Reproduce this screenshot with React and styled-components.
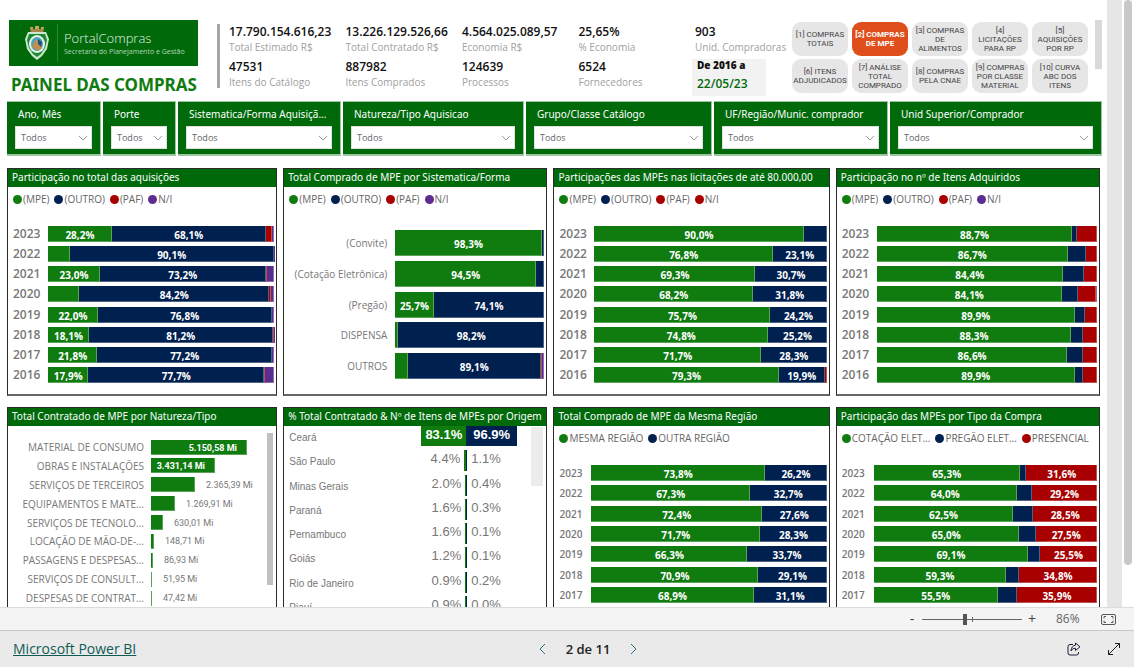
import React from 'react';
import styled, { createGlobalStyle } from 'styled-components';

const GREEN = '#107c10';
const NAVY = '#002050';
const RED = '#a80000';
const PURPLE = '#5c2d91';

const GlobalStyle = createGlobalStyle`
  * {
    box-sizing: border-box;
  }

  body {
    margin: 0;
    font-family: 'Open Sans', 'Noto Sans', sans-serif;
    font-size: 10px;
    color: #666;
    background: #fff;
  }

  button, select {
    font-family: inherit;
  }
`;

const Page = styled.div`
  display: flex;
  flex-direction: column;
  height: 100vh;
  overflow: hidden;
`;

const Viewport = styled.div`
  flex: 1;
  min-height: 0;
  display: flex;
  overflow: hidden;
`;

const Report = styled.main`
  flex: 1;
  min-width: 0;
  padding: 20px 5px 0 7px;
`;

const Gutter = styled.div`
  width: 15px;
  background: #e6e6e6;
`;

const PageScroll = styled.div`
  width: 12px;
  padding: 0 2px;
`;

const PageThumb = styled.div`
  height: 93%;
  border-radius: 4px;
  background: #c8c8c8;
`;

/* Header */

const Header = styled.header`
  display: flex;
  height: 81px;
`;

const Brand = styled.div`
  width: 189px;
  margin-left: 2px;
`;

const Logo = styled.div`
  display: flex;
  align-items: center;
  height: 46px;
  padding-left: 14px;
  background: #006a0b;
  color: #e3f0e3;
`;

const LogoText = styled.div`
  height: 38px;
  margin-left: 6px;
  padding: 5px 0 0 6px;
  border-left: 1px solid #2d8436;
  white-space: nowrap;
`;

const LogoName = styled.div`
  font-size: 13px;
  line-height: 18px;
  font-weight: 300;
`;

const LogoSub = styled.div`
  font-size: 7px;
  line-height: 10px;
  color: #b5d6b6;
`;

const PageTitle = styled.h1`
  margin: 8px 0 0 2px;
  font-family: 'Noto Sans', sans-serif;
  font-size: 17px;
  line-height: 22px;
  font-weight: 700;
  color: ${GREEN};
  white-space: nowrap;
`;

const Kpis = styled.section`
  flex: 1;
  min-width: 0;
  display: grid;
  grid-template-columns: repeat(4, 1fr) 97px;
  grid-auto-rows: 35px;
  align-content: start;
  height: 64px;
  margin: 4px 0 0 19px;
  padding-left: 9px;
  border-left: 3px solid #a6a6a6;
`;

const Kpi = styled.div`
  white-space: nowrap;
`;

const KpiValue = styled.div`
  font-size: 12px;
  line-height: 16px;
  font-weight: 600;
  color: #111;
`;

const KpiLabel = styled.div`
  font-size: 10px;
  line-height: 14px;
  color: #a0a0a0;
`;

const Period = styled.div`
  width: 74px;
  height: 37px;
  margin-left: -3px;
  padding-left: 5px;
  background: #f2f2f2;
  color: #111;
  font-size: 10px;
  line-height: 13px;
  font-weight: 800;
  white-space: nowrap;
`;

const PeriodDate = styled.div`
  margin-top: 2px;
  font-size: 12px;
  line-height: 20px;
  font-weight: 600;
  color: #006a0b;
`;

const Tabs = styled.nav`
  display: grid;
  grid-template-columns: repeat(5, 56px);
  grid-auto-rows: 34px;
  align-content: start;
  gap: 3px 4px;
  margin-top: 2px;
`;

const Tab = styled.button`
  display: flex;
  align-items: center;
  justify-content: center;
  padding: 0;
  border: 0;
  border-radius: 9px;
  background: ${({ $active }) => ($active ? '#de4f1b' : '#e6e6e6')};
  color: ${({ $active }) => ($active ? '#fff' : '#444')};
  font-family: Roboto, sans-serif;
  font-size: 8px;
  line-height: 9px;
  font-weight: ${({ $active }) => ($active ? 700 : 400)};
  white-space: pre-line;
`;

const TabScroll = styled.div`
  width: 7px;
  height: 49px;
  margin-left: 7px;
  background: #d9d9d9;
`;

/* Slicers */

const Slicers = styled.section`
  display: grid;
  grid-template-columns: 94fr 73fr 163fr 181fr 186fr 174fr 212fr;
  gap: 2px;
`;

const Slicer = styled.label`
  display: block;
  min-width: 0;
  height: 55px;
  padding: 4px 8px 0;
  border: 1px solid #9cc79f;
  border-width: 1px 1px 2px 0;
  background: #006a0b;
  color: #fff;
  font-size: 10px;
  line-height: 16px;
  white-space: nowrap;
`;

const SlicerName = styled.span`
  display: block;
  padding-left: 3px;
  font-family: 'Noto Sans', sans-serif;
`;

const SelectBox = styled.span`
  position: relative;
  display: block;
  margin-top: 4px;

  svg {
    position: absolute;
    right: 4px;
    top: 8px;
    pointer-events: none;
  }
`;

const Select = styled.select`
  display: block;
  width: 100%;
  height: 23px;
  padding: 0 0 0 5px;
  appearance: none;
  border: 1px solid #e0e0e0;
  border-radius: 0;
  background: #fff;
  color: #666;
  font-size: 9px;
`;

/* Cards */

const Cards = styled.section`
  display: grid;
  grid-template-columns: 270fr 264fr 276fr 264fr;
  grid-auto-rows: 228px;
  gap: 11px 6px;
  margin: 12px 2px 0 0;
`;

const Card = styled.article`
  display: flex;
  flex-direction: column;
  min-width: 0;
  border: 1px solid #2b2b2b;
  border-bottom: 2px solid #666;
  overflow: hidden;
`;

const CardTitle = styled.h2`
  flex: none;
  height: 18px;
  margin: 0;
  padding-left: 4px;
  background: #006a0b;
  color: #fff;
  font-family: 'Noto Sans', sans-serif;
  font-size: 10px;
  line-height: 17px;
  font-weight: 400;
  white-space: nowrap;
`;

const Legend = styled.ul`
  display: flex;
  gap: 5px;
  height: 14px;
  margin: 5px 0 0;
  padding: 0 0 0 5px;
  list-style: none;
  white-space: nowrap;
`;

const LegendItem = styled.li`
  display: flex;
  align-items: center;
  gap: 1px;
  font-size: 10px;
  line-height: 14px;

  &:before {
    content: '';
    width: 9px;
    height: 9px;
    border-radius: 50%;
    background: ${({ $color }) => $color};
  }
`;

const Rows = styled.div`
  display: flex;
  flex-direction: column;
  justify-content: space-between;
  height: ${({ $height }) => $height}px;
  margin: ${({ $top }) => $top}px 2px 0 5px;
`;

const Row = styled.div`
  display: flex;
  align-items: center;
`;

const Year = styled.div`
  width: ${({ $small }) => ($small ? 32 : 35)}px;
  flex: none;
  font-size: ${({ $small }) => ($small ? 10 : 12)}px;
  font-weight: 600;
  line-height: 16px;
  color: #777;
`;

const Category = styled.div`
  width: 98px;
  flex: none;
  margin-right: 8px;
  text-align: right;
  font-size: 10px;
  white-space: nowrap;
  color: #777;
`;

const Bar = styled.div`
  flex: 1;
  min-width: 0;
  display: flex;
  height: ${({ $tall }) => ($tall ? 26 : 16)}px;
`;

const Segment = styled.div`
  display: flex;
  align-items: center;
  justify-content: center;
  padding-top: 2px;
  overflow: hidden;
  background: ${({ $color }) => $color};
  box-shadow: inset -1px -1px 0 rgba(255, 255, 255, 0.3);
  color: #fff;
  font-size: 10px;
  line-height: 14px;
  font-weight: 700;

  &:empty {
    padding: 0;
  }
`;

/* Contracted totals */

const Split = styled.div`
  flex: 1;
  display: flex;
  min-height: 0;
`;

const Amounts = styled.div`
  flex: 1;
  min-width: 0;
  display: flex;
  flex-direction: column;
  justify-content: space-between;
  height: 169px;
  margin-top: 12px;
`;

const AmountRow = styled.div`
  display: flex;
  align-items: center;
  height: 18px;
`;

const AmountName = styled.div`
  width: 136px;
  flex: none;
  margin-right: 7px;
  text-align: right;
  white-space: nowrap;
  font-size: 10px;
  color: #777;
`;

const AmountBar = styled.div`
  flex: none;
  height: 15px;
  padding-right: ${({ $labelled }) => ($labelled ? 10 : 0)}px;
  background: ${GREEN};
  box-shadow: inset -1px -1px 0 rgba(255, 255, 255, 0.3);
  color: #fff;
  font-family: Roboto, sans-serif;
  font-size: 9px;
  line-height: 17px;
  font-weight: 700;
  text-align: right;
  white-space: nowrap;
`;

const AmountValue = styled.span`
  margin-left: 11px;
  font-family: Roboto, sans-serif;
  font-size: 9px;
  color: #777;
`;

const ListScroll = styled.div`
  width: ${({ $width }) => $width}px;
  height: ${({ $height }) => $height}px;
  margin: ${({ $top }) => $top}px 3px 0 0;
  background: ${({ $color }) => $color};
`;

/* Origin comparison */

const Origins = styled.div`
  flex: 1;
  display: flex;
  flex-direction: column;
  justify-content: space-between;
  height: 194px;
`;

const OriginRow = styled.div`
  display: grid;
  grid-template-columns: 105px 77px 1fr;
  height: 24px;
  font-family: 'Liberation Sans', Arial, sans-serif;
  color: #777;
`;

const OriginName = styled.div`
  padding: 5px 0 0 5px;
  font-size: 10px;
  line-height: 14px;
  white-space: nowrap;
`;

const Side = styled.div`
  display: flex;
  align-items: flex-start;
  justify-content: ${({ $left }) => ($left ? 'flex-end' : 'flex-start')};
  font-size: 13px;
  line-height: 17px;
`;

const OriginValue = styled.span`
  padding: 0 4px;
`;

const OriginBar = styled.span`
  height: 20px;
  padding: 0 ${({ $pad }) => $pad}px;
  background: ${({ $color }) => $color};
  color: #fff;
  font-weight: 700;
`;

const OriginTick = styled.span`
  width: ${({ $wide }) => ($wide ? 2 : 1)}px;
  height: 21px;
  background: ${({ $color }) => $color};
`;

/* Bottom bars */

const ZoomBar = styled.div`
  flex: none;
  display: flex;
  align-items: center;
  justify-content: flex-end;
  height: 23px;
  padding-right: 18px;
  border-top: 1px solid #dcdcdc;
  background: #f4f4f4;
  color: #666;
`;

const ZoomButton = styled.button`
  width: 16px;
  padding: 0;
  border: 0;
  background: none;
  color: #444;
  font-size: 14px;
  line-height: 20px;
`;

const ZoomRange = styled.input`
  width: 100px;
  height: 12px;
  margin: 0 2px;
  appearance: none;
  background: linear-gradient(#666, #666) center / 100% 1px no-repeat,
    linear-gradient(#666, #666) 50px center / 1px 5px no-repeat;

  &::-webkit-slider-thumb {
    appearance: none;
    width: 4px;
    height: 11px;
    background: #555;
  }
`;

const ZoomValue = styled.span`
  width: 38px;
  margin: 0 7px 0 16px;
  font-size: 12px;
  line-height: 16px;
`;

const IconButton = styled.button`
  display: flex;
  padding: 0;
  border: 0;
  background: none;
  color: #333;
`;

const Footer = styled.footer`
  flex: none;
  display: grid;
  grid-template-columns: 1fr auto 1fr;
  align-items: center;
  height: 37px;
  padding: 0 13px;
  border-top: 1px solid #c8c8c8;
  background: #eaeaea;
`;

const PowerBiLink = styled.a`
  font-size: 14px;
  line-height: 20px;
  color: #0f5c55;
`;

const Pager = styled.div`
  display: flex;
  align-items: center;
  gap: 19px;
  margin-left: 42px;
  font-size: 13px;
  font-weight: 600;
  color: #222;
`;

const FooterActions = styled.div`
  display: flex;
  justify-content: flex-end;
  gap: 26px;
`;

const kpis = [
  ['17.790.154.616,23', 'Total Estimado R$'],
  ['13.226.129.526,66', 'Total Contratado R$'],
  ['4.564.025.089,57', 'Economia R$'],
  ['25,65%', '% Economia'],
  ['903', 'Unid. Compradoras'],
  ['47531', 'Itens do Catálogo'],
  ['887982', 'Itens Comprados'],
  ['124639', 'Processos'],
  ['6524', 'Fornecedores'],
];

const tabs = [
  '[1] COMPRAS\nTOTAIS',
  '[2] COMPRAS\nDE MPE',
  '[3] COMPRAS\nDE\nALIMENTOS',
  '[4]\nLICITAÇÕES\nPARA RP',
  '[5]\nAQUISIÇÕES\nPOR RP',
  '[6] ITENS\nADJUDICADOS',
  '[7] ANÁLISE\nTOTAL\nCOMPRADO',
  '[8] COMPRAS\nPELA CNAE',
  '[9] COMPRAS\nPOR CLASSE\nMATERIAL',
  '[10] CURVA\nABC DOS\nITENS',
];

const slicers = [
  'Ano, Mês',
  'Porte',
  'Sistematica/Forma Aquisiçã...',
  'Natureza/Tipo Aquisicao',
  'Grupo/Classe Catálogo',
  'UF/Região/Munic. comprador',
  'Unid Superior/Comprador',
];

const sizeLegend = [
  ['(MPE)', GREEN],
  ['(OUTRO)', NAVY],
  ['(PAF)', RED],
  ['N/I', PURPLE],
];

const totalShare = [
  ['2023', 28.2, 68.1, 2.9, 0.8],
  ['2022', 9.6, 90.1, 0, 0.3],
  ['2021', 23.0, 73.2, 0.4, 3.4],
  ['2020', 13.7, 84.2, 0.5, 1.6],
  ['2019', 22.0, 76.8, 0.4, 0.8],
  ['2018', 18.1, 81.2, 0.5, 0.2],
  ['2017', 21.8, 77.2, 0, 1.0],
  ['2016', 17.9, 77.7, 0.3, 4.1],
];

const byForm = [
  ['(Convite)', 98.3, 1.7],
  ['(Cotação Eletrônica)', 94.5, 5.5],
  ['(Pregão)', 25.7, 74.1],
  ['DISPENSA', 1.8, 98.2],
  ['OUTROS', 8.4, 89.1, 0.7, 1.8],
];

const upTo80k = [
  ['2023', 90.0, 10.0],
  ['2022', 76.8, 23.1],
  ['2021', 69.3, 30.7],
  ['2020', 68.2, 31.8],
  ['2019', 75.7, 24.2],
  ['2018', 74.8, 25.2],
  ['2017', 71.7, 28.3],
  ['2016', 79.3, 19.9, 0.8],
];

const itemShare = [
  ['2023', 88.7, 2.3, 9.0],
  ['2022', 86.7, 8.3, 5.0],
  ['2021', 84.4, 9.8, 5.8],
  ['2020', 84.1, 7.4, 8.0, 0.5],
  ['2019', 89.9, 4.8, 5.3],
  ['2018', 88.3, 5.5, 6.2],
  ['2017', 86.6, 7.2, 6.2],
  ['2016', 89.9, 3.9, 6.2],
];

const sameRegion = [
  ['2023', 73.8, 26.2],
  ['2022', 67.3, 32.7],
  ['2021', 72.4, 27.6],
  ['2020', 71.7, 28.3],
  ['2019', 66.3, 33.7],
  ['2018', 70.9, 29.1],
  ['2017', 68.9, 31.1],
];

const byPurchase = [
  ['2023', 65.3, 3.1, 31.6],
  ['2022', 64.0, 6.8, 29.2],
  ['2021', 62.5, 9.0, 28.5],
  ['2020', 65.0, 7.5, 27.5],
  ['2019', 69.1, 5.4, 25.5],
  ['2018', 59.3, 5.9, 34.8],
  ['2017', 55.5, 8.6, 35.9],
];

const amounts = [
  ['MATERIAL DE CONSUMO', 5150.58, '5.150,58 Mi'],
  ['OBRAS E INSTALAÇÕES', 3431.14, '3.431,14 Mi'],
  ['SERVIÇOS DE TERCEIROS', 2365.39, '2.365,39 Mi'],
  ['EQUIPAMENTOS E MATE...', 1269.91, '1.269,91 Mi'],
  ['SERVIÇOS DE TECNOLO...', 630.01, '630,01 Mi'],
  ['LOCAÇÃO DE MÃO-DE-...', 148.71, '148,71 Mi'],
  ['PASSAGENS E DESPESAS...', 86.93, '86,93 Mi'],
  ['SERVIÇOS DE CONSULT...', 51.95, '51,95 Mi'],
  ['DESPESAS DE CONTRAT...', 47.42, '47,42 Mi'],
];

const origins = [
  ['São Paulo', '4.4%', '1.1%'],
  ['Minas Gerais', '2.0%', '0.4%'],
  ['Paraná', '1.6%', '0.3%'],
  ['Pernambuco', '1.6%', '0.1%'],
  ['Goiás', '1.2%', '0.1%'],
  ['Rio de Janeiro', '0.9%', '0.2%'],
  ['Piauí', '0.9%', '0.0%'],
];

const colors = [GREEN, NAVY, RED, PURPLE];

const formatPercent = (value) => `${value.toFixed(1).replace('.', ',')}%`;

const Crest = () => (
  <svg width="28" height="36" viewBox="0 0 28 36" aria-hidden="true">
    <path d="M7 2h3v2h2V1h4v3h2V2h3l-1 6H8z" fill="#c9a45c" />
    <path d="M8 5h12M8 7h12" stroke="#8a6a35" />
    <path d="M5 7h18l3 7-2 10-5 7-5 4-5-4-5-7L2 14z" fill="#cfe6cf" />
    <path d="M6 9h16l2 6-2 8-4 6-4 3-4-3-4-6-2-8z" fill="#1b8a35" />
    <ellipse cx="14" cy="19" rx="8" ry="9" fill="#e9f3ea" />
    <ellipse cx="14" cy="19" rx="6" ry="7" fill="#4aa3b8" />
    <path d="M9 22l4-8 3 4 3 4-4 4z" fill="#c58e4c" />
    <path d="M15 14l4 3-1 5-3-3z" fill="#23507c" />
  </svg>
);

const Chevron = () => (
  <svg width="10" height="8" viewBox="0 0 10 8" fill="none" stroke="#999" aria-hidden="true">
    <path d="M1 2l4 4 4-4" />
  </svg>
);

const ChartLegend = ({ items }) => (
  <Legend>
    {items.map(([name, color]) => (
      <LegendItem key={name} $color={color}>
        {name}
      </LegendItem>
    ))}
  </Legend>
);

// segments too narrow for their label stay blank
const StackedRow = ({ values, tall }) => (
  <Bar $tall={tall}>
    {values.map((value, i) => (
      <Segment key={colors[i]} $color={colors[i]} style={{ width: `${value}%` }}>
        {value >= 14 && formatPercent(value)}
      </Segment>
    ))}
  </Bar>
);

const YearChart = ({ title, legend, data, small }) => (
  <Card>
    <CardTitle>{title}</CardTitle>
    <ChartLegend items={legend} />
    <Rows $height={small ? 138 : 157} $top={20}>
      {data.map(([year, ...values]) => (
        <Row key={year}>
          <Year $small={small}>{year}</Year>
          <StackedRow values={values} />
        </Row>
      ))}
    </Rows>
  </Card>
);

const App = () => (
  <>
    <GlobalStyle />
    <Page>
      <Viewport>
        <Report>
          <Header>
            <Brand>
              <Logo>
                <Crest />
                <LogoText>
                  <LogoName>PortalCompras</LogoName>
                  <LogoSub>Secretaria do Planejamento e Gestão</LogoSub>
                </LogoText>
              </Logo>
              <PageTitle>PAINEL DAS COMPRAS</PageTitle>
            </Brand>
            <Kpis>
              {kpis.map(([value, label]) => (
                <Kpi key={label}>
                  <KpiValue>{value}</KpiValue>
                  <KpiLabel>{label}</KpiLabel>
                </Kpi>
              ))}
              <Period>
                De 2016 a<PeriodDate>22/05/23</PeriodDate>
              </Period>
            </Kpis>
            <Tabs>
              {tabs.map((tab, i) => (
                <Tab key={tab} type="button" $active={i === 1}>
                  {tab}
                </Tab>
              ))}
            </Tabs>
            <TabScroll />
          </Header>

          <Slicers>
            {slicers.map((name) => (
              <Slicer key={name}>
                <SlicerName>{name}</SlicerName>
                <SelectBox>
                  <Select>
                    <option>Todos</option>
                  </Select>
                  <Chevron />
                </SelectBox>
              </Slicer>
            ))}
          </Slicers>

          <Cards>
            <YearChart title="Participação no total das aquisições" legend={sizeLegend} data={totalShare} />
            <Card>
              <CardTitle>Total Comprado de MPE por Sistematica/Forma</CardTitle>
              <ChartLegend items={sizeLegend} />
              <Rows $height={149} $top={24}>
                {byForm.map(([name, ...values]) => (
                  <Row key={name}>
                    <Category>{name}</Category>
                    <StackedRow values={values} tall />
                  </Row>
                ))}
              </Rows>
            </Card>
            <YearChart
              title="Participações das MPEs nas licitações de até 80.000,00"
              legend={[...sizeLegend.slice(0, 3), ['N/I', RED]]}
              data={upTo80k}
            />
            <YearChart title="Participação no nº de Itens Adquiridos" legend={sizeLegend} data={itemShare} />

            <Card>
              <CardTitle>Total Contratado de MPE por Natureza/Tipo</CardTitle>
              <Split>
                <Amounts>
                  {amounts.map(([name, value, label]) => {
                    const width = Math.max(1, Math.round((value / 5150.58) * 96));
                    const inside = value > 3000;
                    return (
                      <AmountRow key={name}>
                        <AmountName>{name}</AmountName>
                        <AmountBar $labelled={inside} style={{ width }}>
                          {inside && label}
                        </AmountBar>
                        {!inside && <AmountValue>{label}</AmountValue>}
                      </AmountRow>
                    );
                  })}
                </Amounts>
                <ListScroll $width={6} $height={152} $top={7} $color="#c0c0c0" />
              </Split>
            </Card>

            <Card>
              <CardTitle>% Total Contratado &amp; Nº de Itens de MPEs por Origem</CardTitle>
              <Split>
                <Origins>
                  <OriginRow>
                    <OriginName>Ceará</OriginName>
                    <Side $left>
                      <OriginBar $color={GREEN} $pad={4}>83.1%</OriginBar>
                    </Side>
                    <Side>
                      <OriginBar $color={NAVY} $pad={7}>96.9%</OriginBar>
                    </Side>
                  </OriginRow>
                  {origins.map(([name, total, items], i) => (
                    <OriginRow key={name}>
                      <OriginName>{name}</OriginName>
                      <Side $left>
                        <OriginValue>{total}</OriginValue>
                        <OriginTick $wide={i === 0} $color={GREEN} />
                      </Side>
                      <Side>
                        <OriginTick $color={NAVY} />
                        <OriginValue>{items}</OriginValue>
                      </Side>
                    </OriginRow>
                  ))}
                </Origins>
                <ListScroll $width={12} $height={59} $top={1} $color="#ececec" />
              </Split>
            </Card>

            <YearChart
              small
              title="Total Comprado de MPE da Mesma Região"
              legend={[
                ['MESMA REGIÃO', GREEN],
                ['OUTRA REGIÃO', NAVY],
              ]}
              data={sameRegion}
            />
            <YearChart
              small
              title="Participação das MPEs por Tipo da Compra"
              legend={[
                ['COTAÇÃO ELET...', GREEN],
                ['PREGÃO ELET...', NAVY],
                ['PRESENCIAL', RED],
              ]}
              data={byPurchase}
            />
          </Cards>
        </Report>
        <Gutter />
        <PageScroll>
          <PageThumb />
        </PageScroll>
      </Viewport>

      <ZoomBar>
        <ZoomButton type="button" aria-label="Diminuir zoom">-</ZoomButton>
        <ZoomRange type="range" min="10" max="190" defaultValue="86" aria-label="Zoom" />
        <ZoomButton type="button" aria-label="Aumentar zoom">+</ZoomButton>
        <ZoomValue>86%</ZoomValue>
        <IconButton type="button" aria-label="Ajustar à página">
          <svg width="15" height="11" viewBox="0 0 15 11" fill="none" stroke="#555">
            <rect x="0.5" y="0.5" width="14" height="10" rx="1.5" />
            <path d="M3 4.500v-2h2M10 2.500h2v2M12 6.500v2h-2M5 8.500H3v-2" />
          </svg>
        </IconButton>
      </ZoomBar>

      <Footer>
        <div>
          <PowerBiLink href="#powerbi">Microsoft Power BI</PowerBiLink>
        </div>
        <Pager>
          <IconButton type="button" aria-label="Página anterior">
            <svg width="8" height="12" viewBox="0 0 8 12" fill="none" stroke="#2a6f85">
              <path d="M6 1L1 6l5 5" />
            </svg>
          </IconButton>
          2 de 11
          <IconButton type="button" aria-label="Próxima página">
            <svg width="8" height="12" viewBox="0 0 8 12" fill="none" stroke="#2a6f85">
              <path d="M2 1l5 5-5 5" />
            </svg>
          </IconButton>
        </Pager>
        <FooterActions>
          <IconButton type="button" aria-label="Compartilhar">
            <svg width="14" height="14" viewBox="0 0 14 14" fill="none" stroke="#1d1d3a" strokeLinejoin="round">
              <path d="M6 2.500H3a2 2 0 0 0-2 2V11a2 2 0 0 0 2 2h6.500a2 2 0 0 0 2-2v-1" />
              <path d="M8.500 1l4.500 3.800-4.500 3.700V6.300C6.300 6.300 5 7.200 4 9c.1-3.300 1.700-5.500 4.500-5.800z" />
            </svg>
          </IconButton>
          <IconButton type="button" aria-label="Tela inteira">
            <svg width="14" height="14" viewBox="0 0 14 14" fill="none" stroke="#1d1d1d">
              <path d="M1.500 12.500l11-11M8 1.500h4.500V6M1.500 8v4.500H6" />
            </svg>
          </IconButton>
        </FooterActions>
      </Footer>
    </Page>
  </>
);

export default App;
